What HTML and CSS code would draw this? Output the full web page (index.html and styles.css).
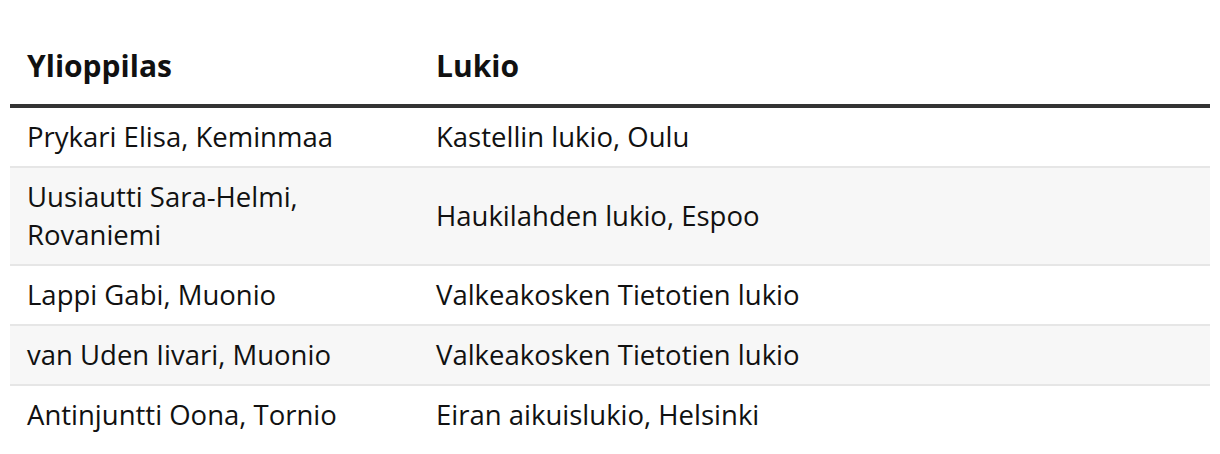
FILE: index.html
```html
<!DOCTYPE html>
<html lang="fi">
<head>
<meta charset="utf-8">
<link rel="stylesheet" href="styles.css">
</head>
<body>
<table class="results">
  <thead>
    <tr><th class="col-a">Ylioppilas</th><th>Lukio</th></tr>
  </thead>
  <tbody>
    <tr><td>Prykari Elisa, Keminmaa</td><td>Kastellin lukio, Oulu</td></tr>
    <tr><td>Uusiautti Sara-Helmi, Rovaniemi</td><td>Haukilahden lukio, Espoo</td></tr>
    <tr><td>Lappi Gabi, Muonio</td><td>Valkeakosken Tietotien lukio</td></tr>
    <tr><td>van Uden Iivari, Muonio</td><td>Valkeakosken Tietotien lukio</td></tr>
    <tr><td>Antinjuntti Oona, Tornio</td><td>Eiran aikuislukio, Helsinki</td></tr>
  </tbody>
</table>
</body>
</html>
```
FILE: styles.css
```css
html, body {
  margin: 0;
  padding: 0;
  background: #fff;
}
body {
  padding: 26px 10px 0;
  font-family: "Open Sans", "Liberation Sans", sans-serif;
  font-size: 27.5px;
  line-height: 38px;
  color: #111;
}
.results {
  width: 1200px;
  border-collapse: collapse;
  table-layout: fixed;
}
.results th {
  text-align: left;
  font-weight: 700;
  font-size: 30px;
  line-height: normal;
  padding: 18.5px 17px 18.6px;
  border-bottom: 4px solid #333;
}
.results .col-a {
  width: 375px;
}
.results td {
  padding: 10px 17px;
  border-bottom: 2px solid #e6e6e6;
  vertical-align: middle;
}
.results tbody tr:nth-child(even) td {
  background: #f7f7f7;
}
.results tbody tr:last-child td {
  border-bottom: none;
}
```
